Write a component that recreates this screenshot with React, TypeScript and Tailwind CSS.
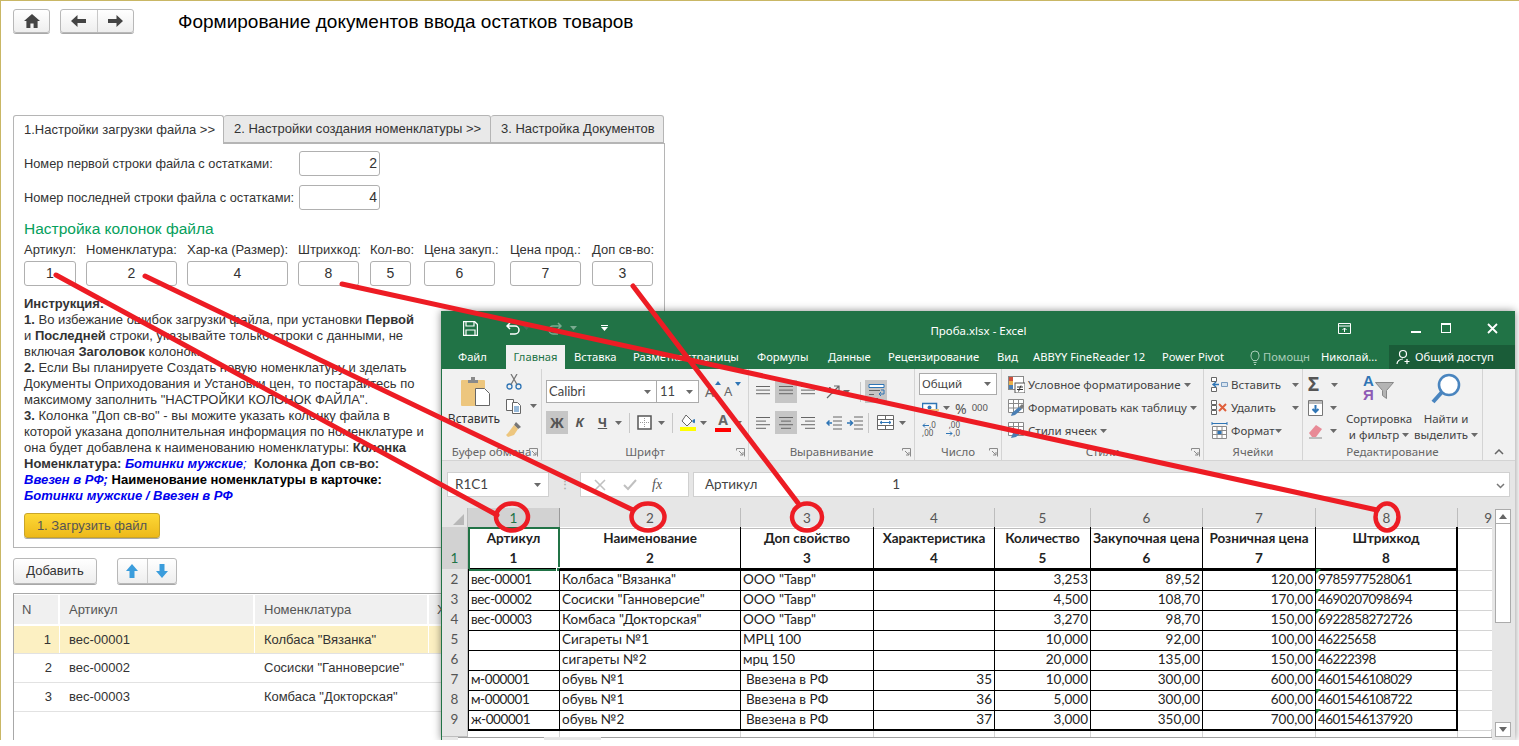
import React from "react";

const Caret = ({ className = "" }: { className?: string }) => (
  <svg width="7" height="4" viewBox="0 0 7 4" className={"shrink-0 " + className}><path d="M0 0h7L3.5 4z" fill="#6a6a6a" /></svg>
);

const Btn1C = ({ children, className = "" }: { children: React.ReactNode; className?: string }) => (
  <div className={"flex items-center justify-center rounded-[3px] border border-[#b8b8b8] bg-linear-to-b from-white to-[#eeeeee] shadow-[0_1px_0_#a8a8a8] " + className}>{children}</div>
);

const Field = ({ v, w, align = "center" }: { v: string; w: string; align?: string }) => (
  <div className={"h-[25px] rounded-[3px] border border-[#b0b0b0] flex items-center text-[#333] text-[14px] " + w + (align === "right" ? " justify-end pr-[2px]" : " justify-center")}>{v}</div>
);

const cols = [
  ["Артикул:", "w-[52px]", "1", "mr-[10px]"],
  ["Номенклатура:", "w-[91px]", "2", "mr-[10px]"],
  ["Хар-ка (Размер):", "w-[101px]", "4", "mr-[10px]"],
  ["Штрихкод:", "w-[61px]", "8", "mr-[11px]"],
  ["Кол-во:", "w-[41px]", "5", "mr-[13px]"],
  ["Цена закуп.:", "w-[71px]", "6", "mr-[15px]"],
  ["Цена прод.:", "w-[71px]", "7", "mr-[11px]"],
  ["Доп св-во:", "w-[61px]", "3", ""],
];

const Page1C = () => (
  <div className="w-[700px] h-[740px] border-l border-[#c9b765] font-['Liberation_Sans',Arial,sans-serif] text-[13px] text-[#333] overflow-hidden">
    <div className="flex items-start pl-[12px] pt-[9px] h-[115px]">
      <Btn1C className="w-[37px] h-[24px]">
        <svg width="16" height="14" viewBox="0 0 16 14"><path d="M8 0L0 7h2.4v7h4V9.500h3.200V14h4V7H16z" fill="#444" /></svg>
      </Btn1C>
      <Btn1C className="w-[74px] h-[24px] ml-[10px]">
        <span className="flex-1 flex justify-center border-r border-[#c8c8c8] h-full items-center">
          <svg width="15" height="12" viewBox="0 0 15 12"><path d="M6.500 0L0 6l6.500 6V8H15V4H6.500z" fill="#444" /></svg>
        </span>
        <span className="flex-1 flex justify-center">
          <svg width="15" height="12" viewBox="0 0 15 12"><path d="M8.500 0L15 6l-6.500 6V8H0V4h8.500z" fill="#444" /></svg>
        </span>
      </Btn1C>
      <div className="ml-[44px] mt-[2px] text-[19px] leading-[22px] text-black whitespace-nowrap">Формирование документов ввода остатков товаров</div>
    </div>

    <div className="ml-[12px] w-[652px]">
      <div className="flex h-[28px] items-stretch">
        <div className="w-[211px] border border-b-0 border-[#b5b5b5] rounded-t-[3px] bg-white flex items-center pl-[10px] pb-px z-10 -mb-px">1.Настройки загрузки файла &gt;&gt;</div>
        <div className="w-[267px] border border-l-0 border-[#b5b5b5] rounded-t-[3px] bg-[#e9e9e9] flex items-center pl-[10px] pb-px">2. Настройки создания номенклатуры &gt;&gt;</div>
        <div className="w-[173px] border border-l-0 border-[#b5b5b5] rounded-t-[3px] bg-[#e9e9e9] flex items-center pl-[10px] pb-px">3. Настройка Документов</div>
      </div>
      <div className="h-[405px] border border-[#b5b5b5] pl-[10px] pt-[7px]">
        <div className="flex items-center h-[25px] text-[12.800px]"><span className="w-[275px] whitespace-nowrap">Номер первой строки файла с остатками:</span><Field v="2" w="w-[81px]" align="right" /></div>
        <div className="flex items-center h-[25px] mt-[9px] text-[12.800px]"><span className="w-[275px] whitespace-nowrap">Номер последней строки файла с остатками:</span><Field v="4" w="w-[81px]" align="right" /></div>
        <div className="mt-[9px] text-[15.500px] leading-[20px] text-[#06a05c]">Настройка колонок файла</div>
        <div className="flex mt-[3px] leading-[16px] whitespace-nowrap">
          {cols.map((c) => <div key={c[0]} className={c[1] + " " + c[3]}>{c[0]}</div>)}
        </div>
        <div className="flex mt-[3px]">
          {cols.map((c) => <div key={c[0]} className={c[3]}><Field v={c[2]} w={c[1]} /></div>)}
        </div>
        <div className="mt-[10px] leading-[16px] whitespace-nowrap">
          <b>Инструкция:</b><br />
          <b>1.</b> Во избежание ошибок загрузки файла, при установки <b>Первой</b><br />
          и <b>Последней</b> строки, указывайте только строки с данными, не<br />
          включая <b>Заголовок</b> колонок.<br />
          <b>2.</b> Если Вы планируете Создать новую номенклатуру и зделать<br />
          Документы Оприходования и Установки цен, то постарайтесь по<br />
          максимому заполнить "НАСТРОЙКИ КОЛОНОК ФАЙЛА".<br />
          <b>3.</b> Колонка "Доп св-во" - вы можите указать колонку файла в<br />
          которой указана дополнительная информация по номенклатуре и<br />
          она будет добавлена к наименованию номенклатуры: <b>Колонка</b><br />
          <b>Номенклатура: </b><b className="italic text-[#0000ee]">Ботинки мужские</b><i className="text-[#0000ee]">;</i>&nbsp; <b>Колонка Доп св-во:</b><br />
          <b className="italic text-[#0000ee]">Ввезен в РФ; </b><b className="text-black">Наименование номенклатуры в карточке:</b><br />
          <b className="italic text-[#0000ee]">Ботинки мужские / Ввезен в РФ</b>
        </div>
        <div className="mt-[9px] w-[136px] h-[25px] rounded-[3px] border border-[#c9a52a] bg-linear-to-b from-[#fdd835] to-[#edb91a] shadow-[0_1px_0_#a8a8a8] flex items-center justify-center text-[#555]">1. Загрузить файл</div>
      </div>
      <div className="flex items-start mt-[10px]">
        <Btn1C className="w-[84px] h-[26px]">Добавить</Btn1C>
        <Btn1C className="w-[60px] h-[26px] ml-[20px]">
          <span className="flex-1 flex justify-center border-r border-[#c8c8c8] h-full items-center">
            <svg width="12" height="14" viewBox="0 0 12 14"><path d="M6 0l6 7H8.500v7h-5V7H0z" fill="#3b9ddc" /></svg>
          </span>
          <span className="flex-1 flex justify-center">
            <svg width="12" height="14" viewBox="0 0 12 14"><path d="M6 14l6-7H8.500V0h-5v7H0z" fill="#3b9ddc" /></svg>
          </span>
        </Btn1C>
      </div>
      <div className="mt-[9px] h-[150px] border-l border-t border-[#a8a8a8] w-[460px]">
        <div className="flex h-[31px] bg-[#f0f0f0] border-b-2 border-white mt-px">
          <div className="w-[46px] pl-[8px] flex items-center border-r-2 border-white text-[#555]">N</div>
          <div className="w-[195px] pl-[9px] flex items-center border-r-2 border-white text-[#555]">Артикул</div>
          <div className="w-[174px] pl-[9px] flex items-center border-r-2 border-white text-[#555]">Номенклатура</div>
          <div className="flex-1 pl-[8px] flex items-center text-[#555]">Х</div>
        </div>
        {[["1", "вес-00001", 'Колбаса "Вязанка"', true], ["2", "вес-00002", 'Сосиски "Ганноверсие"', false], ["3", "вес-00003", 'Комбаса "Докторская"', false]].map((r) => (
          <div key={r[0] as string} className={"flex border-b border-[#e2e2e2] " + (r[3] ? "h-[28px] bg-[#fcf0c2]" : "h-[29px]")}>
            <div className={"w-[46px] pr-[8px] flex items-center justify-end " + (r[3] ? "border-r border-white" : "")}>{r[0]}</div>
            <div className={"w-[195px] pl-[9px] flex items-center " + (r[3] ? "border-r border-white" : "")}>{r[1]}</div>
            <div className={"w-[174px] pl-[9px] flex items-center " + (r[3] ? "border-r border-white" : "")}>{r[2]}</div>
          </div>
        ))}
      </div>
    </div>
  </div>
);

/* ---------- Excel icons ---------- */
const Lines = ({ rows }: { rows: [number, number][] }) => (
  <svg width="15" height="14" viewBox="0 0 15 14">
    {rows.map((r, i) => <rect key={i} x={r[0]} y={i === 0 ? 1 : 1 + i * 3.6} width={r[1]} height="1" fill="#666" />)}
  </svg>
);
const Sel = ({ children, on }: { children: React.ReactNode; on?: boolean }) => (
  <div className={"w-[22px] h-[23px] flex items-center justify-center " + (on ? "bg-[#c6c6c6]" : "")}>{children}</div>
);

const RowIcon = ({ kind }: { kind: string }) => {
  if (kind === "cond") return (
    <svg width="17" height="17" viewBox="0 0 17 17">
      <rect x=".5" y=".5" width="15" height="13" fill="#fff" stroke="#888" />
      <rect x="1" y="1" width="4" height="4" fill="#d0503c" /><rect x="1" y="5" width="4" height="4" fill="#e9b04a" /><rect x="1" y="9" width="4" height="4" fill="#4a7fb5" />
      <rect x="7" y="7" width="10" height="10" fill="#fff" stroke="#555" /><path d="M9 11h6M9 13.500h6M13 9.500l-2.500 6" stroke="#333" fill="none" />
    </svg>
  );
  if (kind === "table") return (
    <svg width="17" height="17" viewBox="0 0 17 17">
      <path d="M.5.500h15v13H.500zM.500 4.500h15M.500 9h15M5.500.500v13M10.500.500v13" fill="#fff" stroke="#8a8a8a" />
      <path d="M3 17l1-3 7-6 3 2-7 6z" fill="#4a7fb5" /><path d="M11 8l3-3 2 2-2 3z" fill="#7a7a7a" />
    </svg>
  );
  if (kind === "cell") return (
    <svg width="17" height="17" viewBox="0 0 17 17">
      <path d="M.5.500h15v13H.500zM.500 4.500h15M.500 9h15M5.500.500v13M10.500.500v13" fill="#fff" stroke="#8a8a8a" />
      <path d="M3 16l2-5 8-4 1 3-6 5z" fill="#4a7fb5" />
    </svg>
  );
  if (kind === "ins") return (
    <svg width="17" height="17" viewBox="0 0 17 17">
      <path d="M.5 1.500h5v4h-5zM.500 11.500h5v4h-5z" fill="#fff" stroke="#666" /><path d="M10.500 6.500h6v4h-6z" fill="#d8e4f0" stroke="#7a9cc0" /><path d="M2 8.500h6M5 6l-3 2.500L5 11" fill="none" stroke="#2f75b5" strokeWidth="1.400" />
    </svg>
  );
  if (kind === "del") return (
    <svg width="17" height="17" viewBox="0 0 17 17">
      <path d="M.5 1.500h5v4h-5zM.500 6.500h5v4h-5zM.500 11.500h5v4h-5z" fill="#fff" stroke="#666" /><path d="M8 5l7 7M15 5l-7 7" stroke="#e0603c" strokeWidth="2" />
    </svg>
  );
  return (
    <svg width="17" height="17" viewBox="0 0 17 17">
      <path d="M1.500 4.500h14v12h-14zM1.500 8.500h14M1.500 12.500h14M6 4.500v12M11 4.500v12" fill="#fff" stroke="#8a8a8a" /><rect x="6.500" y="9" width="4" height="3" fill="#2f75b5" /><path d="M1 1.500h15M1 0v3M16 0v3" stroke="#2f75b5" fill="none" />
    </svg>
  );
};

const ribbonGroupLabel = "h-[16px] flex items-center justify-center text-[#666] relative text-[11.500px] whitespace-nowrap";
const Launch = () => (
  <svg width="9" height="9" viewBox="0 0 9 9" className="absolute right-[3px] top-[4px]"><path d="M.5.500h8v8M.500.500v2M3 3l4 4M7 4v3H4" fill="none" stroke="#8a8a8a" /></svg>
);

const Ribbon = () => (
  <div className="flex h-[92px] bg-[#f1f1f1] border-b border-[#d4d4d4] text-[#444] text-[11.500px] font-['Noto_Sans',sans-serif]">
    {/* clipboard */}
    <div className="w-[100px] border-r border-[#d4d4d4] flex flex-col">
      <div className="flex h-[76px]">
        <div className="w-[64px] flex flex-col items-center pt-[8px]">
          <svg width="30" height="29" viewBox="0 0 30 29" className="ml-[4px]">
            <rect x="0" y="3" width="24" height="26" rx="1" fill="#edc67e" />
            <path d="M7 3h3V0h4v3h3v3H7z" fill="#8a8a8a" />
            <path d="M14.500 11.500h9l5 5v12h-14z" fill="#fff" stroke="#666" />
          </svg>
          <div className="mt-[4px] text-[#333] text-[12px]">Вставить</div>
        </div>
        <div className="flex flex-col pt-[5px] gap-[8px]">
          <svg width="16" height="16" viewBox="0 0 16 16"><circle cx="3.500" cy="12.500" r="2.500" fill="none" stroke="#2f75b5" strokeWidth="1.300" /><circle cx="12.500" cy="12.500" r="2.500" fill="none" stroke="#2f75b5" strokeWidth="1.300" /><path d="M5 10.500L11 0M11 10.500L5 0" stroke="#777" strokeWidth="1.300" /></svg>
          <div className="flex items-center gap-[8px]">
            <svg width="16" height="16" viewBox="0 0 16 16"><path d="M.5 1.500h7v11h-7z" fill="#fff" stroke="#666" /><path d="M6.500 4.500h5l3 3v8h-8z" fill="#fff" stroke="#666" /><path d="M8 9h5M8 11h5M8 13h5" stroke="#2f75b5" /></svg>
            <Caret />
          </div>
          <svg width="16" height="16" viewBox="0 0 16 16"><path d="M10 0l5 5-3 2-4-4z" fill="#777" /><path d="M8 3l4 4-4 6-6 2-2-2 2-2z" fill="#edc67e" /></svg>
        </div>
      </div>
      <div className={ribbonGroupLabel}>Буфер обмена<Launch /></div>
    </div>
    {/* font */}
    <div className="w-[207px] border-r border-[#d4d4d4] flex flex-col pl-[4px]">
      <div className="h-[76px] pt-[11px]">
        <div className="flex items-center">
          <div className="w-[111px] h-[23px] bg-white border border-[#ababab] flex items-center pl-[2px] justify-between pr-[5px] font-['Lato',sans-serif] text-[13px]">Calibri<Caret /></div>
          <div className="w-[42px] h-[23px] bg-white border border-l-0 border-[#ababab] flex items-center pl-[3px] justify-between pr-[5px] font-['Lato',sans-serif] text-[13px]">11<Caret /></div>
          <div className="relative ml-[6px] w-[18px] text-[14px] text-[#666]">A<svg width="6" height="4" viewBox="0 0 6 4" className="absolute top-0 right-[2px]"><path d="M0 4h6L3 0z" fill="#2f75b5" /></svg></div>
          <div className="relative ml-[1px] w-[18px] text-[13px] text-[#666]">A<svg width="6" height="4" viewBox="0 0 6 4" className="absolute top-0 right-[1px]"><path d="M0 0h6L3 4z" fill="#2f75b5" /></svg></div>
        </div>
        <div className="flex items-center mt-[8px] h-[23px] text-[#555]">
          <div className="w-[22px] h-[23px] bg-[#c6c6c6] flex items-center justify-center font-bold text-[14px]">Ж</div>
          <div className="w-[23px] flex justify-center italic font-bold text-[13px]">К</div>
          <div className="w-[23px] flex justify-center font-bold text-[13px] underline">Ч</div>
          <Caret className="ml-[1px]" />
          <div className="w-px h-[20px] bg-[#c8c8c8] ml-[7px]" />
          <svg width="15" height="15" viewBox="0 0 15 15" className="ml-[7px]"><path d="M1 1h13v13H1z" fill="#fff" stroke="#555" strokeWidth="1.500" /><path d="M7.500 3v9M3 7.500h9" stroke="#999" strokeDasharray="1 1" /></svg>
          <Caret className="ml-[6px]" />
          <div className="w-px h-[20px] bg-[#c8c8c8] ml-[7px]" />
          <div className="ml-[7px] flex flex-col items-center w-[16px]">
            <svg width="16" height="13" viewBox="0 0 16 13"><path d="M6 1l6 6-5 5-5-5z" fill="#fff" stroke="#666" /><path d="M12 7c2-2 3-3 3 0s-1 3-3 0z" fill="#2f75b5" /></svg>
            <div className="w-[16px] h-[4px] bg-[#ffff00]" />
          </div>
          <Caret className="ml-[4px]" />
          <div className="ml-[8px] flex flex-col items-center w-[16px] leading-[14px]">
            <span className="font-bold text-[14px] text-[#666]">A</span>
            <div className="w-[16px] h-[4px] bg-[#ff0000] mt-px" />
          </div>
          <Caret className="ml-[4px]" />
        </div>
      </div>
      <div className={ribbonGroupLabel + " -ml-[4px]"}>Шрифт<Launch /></div>
    </div>
    {/* align */}
    <div className="w-[166px] border-r border-[#d4d4d4] flex flex-col pl-[7px]">
      <div className="h-[76px] pt-[11px]">
        <div className="flex items-center h-[23px]">
          <div className="w-[19px]"><Lines rows={[[0, 14], [0, 14], [0, 14]]} /></div>
          <Sel on><Lines rows={[[0, 14], [0, 14], [0, 14]]} /></Sel>
          <div className="w-[18px] ml-[4px]"><Lines rows={[[0, 14], [0, 14], [0, 14]]} /></div>
          <svg width="16" height="16" viewBox="0 0 16 16" className="ml-[6px]"><path d="M2 14L14 2M9 2h5v5" fill="none" stroke="#666" strokeWidth="1.200" /><path d="M1 7l4-4 3 7" fill="none" stroke="#666" /></svg>
          <Caret className="ml-[2px]" />
          <div className="w-px h-[20px] bg-[#c8c8c8] ml-[10px]" />
          <div className="ml-[4px] w-[22px] h-[23px] bg-[#c6c6c6] flex items-center justify-center">
            <svg width="17" height="17" viewBox="0 0 17 17"><path d="M1 1.500h15v3H1z" fill="#fff" stroke="#2f75b5" /><path d="M1 7.500h11M1 11.500h5M1 15.500h9" stroke="#666" /><path d="M13 7h3v4h-5M13 9l-2 2 2 2" fill="none" stroke="#2f75b5" /></svg>
          </div>
        </div>
        <div className="flex items-center h-[23px] mt-[8px]">
          <div className="w-[19px]"><Lines rows={[[0, 14], [0, 10], [0, 14], [0, 10]]} /></div>
          <Sel on><Lines rows={[[0, 14], [2, 10], [0, 14], [2, 10]]} /></Sel>
          <div className="w-[18px] ml-[4px]"><Lines rows={[[0, 14], [4, 10], [0, 14], [4, 10]]} /></div>
          <svg width="16" height="14" viewBox="0 0 16 14" className="ml-[7px]"><path d="M7 1h9M7 5h9M7 9h9M7 13h9" stroke="#666" /><path d="M6 7H1M3.500 4.500L1 7l2.500 2.500" fill="none" stroke="#2f75b5" strokeWidth="1.500" /></svg>
          <svg width="16" height="14" viewBox="0 0 16 14" className="ml-[5px]"><path d="M7 1h9M7 5h9M7 9h9M7 13h9" stroke="#666" /><path d="M0 7h5M3 4.500L5.500 7 3 9.500" fill="none" stroke="#2f75b5" strokeWidth="1.500" /></svg>
          <div className="w-px h-[20px] bg-[#c8c8c8] ml-[5px]" />
          <svg width="17" height="15" viewBox="0 0 17 15" className="ml-[8px]"><path d="M.5.500h16v14H.500zM.500 4.500h16M.500 10.500h16M8.500.500v4M8.500 10.500v4" fill="#fff" stroke="#666" /><path d="M3 7.500h11M5 6l-2 1.500L5 9M12 6l2 1.500L12 9" fill="none" stroke="#2f75b5" /></svg>
          <Caret className="ml-[5px]" />
        </div>
      </div>
      <div className={ribbonGroupLabel + " -ml-[7px]"}>Выравнивание<Launch /></div>
    </div>
    {/* number */}
    <div className="w-[87px] border-r border-[#d4d4d4] flex flex-col pl-[4px]">
      <div className="h-[76px] pt-[4px]">
        <div className="w-[78px] h-[22px] bg-white border border-[#ababab] flex items-center justify-between pl-[2px] pr-[5px]">Общий<Caret /></div>
        <div className="flex items-center h-[22px] mt-[2px]">
          <svg width="17" height="15" viewBox="0 0 17 15" className="ml-[3px]"><rect x=".5" y="2.500" width="14" height="8" fill="#fff" stroke="#2f75b5" strokeWidth="1.500" /><circle cx="7.500" cy="6.500" r="2" fill="#2f75b5" /><rect x="7" y="8" width="10" height="2" fill="#edc67e" /><rect x="7" y="11" width="10" height="2" fill="#edc67e" /></svg>
          <Caret className="ml-[4px]" />
          <span className="ml-[5px] text-[14px] text-[#555]">%</span>
          <span className="ml-[5px] text-[9.500px] text-[#555]">000</span>
        </div>
        <div className="flex items-start h-[22px] mt-[2px] text-[8px] leading-[8px] text-[#555]">
          <div className="ml-[3px] w-[14px] flex flex-col">
            <span className="flex items-center"><svg width="7" height="5" viewBox="0 0 7 5"><path d="M7 2.500H1M3 .500L1 2.500l2 2" stroke="#2f75b5" fill="none" /></svg>,0</span>
            <span>,00</span>
          </div>
          <div className="ml-[10px] w-[14px] flex flex-col items-end">
            <span>,00</span>
            <span className="flex items-center"><svg width="7" height="5" viewBox="0 0 7 5"><path d="M0 2.500h6M4 .500l2 2-2 2" stroke="#2f75b5" fill="none" /></svg>,0</span>
          </div>
        </div>
      </div>
      <div className={ribbonGroupLabel + " -ml-[4px]"}>Число<Launch /></div>
    </div>
    {/* styles */}
    <div className="w-[202px] border-r border-[#d4d4d4] flex flex-col pl-[6px]">
      <div className="h-[76px] pt-[4px]">
        {[["cond", "Условное форматирование"], ["table", "Форматировать как таблицу"], ["cell", "Стили ячеек"]].map((r) => (
          <div key={r[0]} className="flex items-center h-[23px] whitespace-nowrap">
            <RowIcon kind={r[0]} />
            <span className="ml-[3px]">{r[1]}</span>
            <Caret className="ml-[3px]" />
          </div>
        ))}
      </div>
      <div className={ribbonGroupLabel + " -ml-[6px]"}>Стили<Launch /></div>
    </div>
    {/* cells */}
    <div className="w-[99px] border-r border-[#d4d4d4] flex flex-col pl-[7px]">
      <div className="h-[76px] pt-[4px]">
        {[["ins", "Вставить", "w-[61px]"], ["del", "Удалить", "w-[61px]"], ["fmt", "Формат", "w-[44px]"]].map((r) => (
          <div key={r[0]} className="flex items-center h-[23px] whitespace-nowrap">
            <RowIcon kind={r[0]} />
            <span className={"ml-[3px] " + r[2]}>{r[1]}</span>
            <Caret />
          </div>
        ))}
      </div>
      <div className={ribbonGroupLabel + " -ml-[7px]"}>Ячейки</div>
    </div>
    {/* edit */}
    <div className="w-[180px] border-r border-[#d4d4d4] flex flex-col">
      <div className="h-[76px] flex">
        <div className="w-[42px] pl-[5px] pt-[4px]">
          <div className="flex items-center h-[23px]"><span className="text-[19px] font-bold text-[#555] w-[20px] leading-none">Σ</span><Caret className="ml-[3px]" /></div>
          <div className="flex items-center h-[23px]">
            <svg width="15" height="16" viewBox="0 0 15 16"><path d="M.5.500h14v15H.500z" fill="#fff" stroke="#777" /><rect x="1" y="1" width="13" height="3" fill="#bbb" /><path d="M7.500 5v7M4.500 9l3 3 3-3" fill="none" stroke="#2f75b5" strokeWidth="2" /></svg>
            <Caret className="ml-[7px]" />
          </div>
          <div className="flex items-center h-[23px]">
            <svg width="16" height="16" viewBox="0 0 16 16"><path d="M1 10l7-8 6 4-6 8H4z" fill="#e88a96" /><path d="M1 15h13" stroke="#888" /></svg>
            <Caret className="ml-[6px]" />
          </div>
        </div>
        <div className="w-[68px] flex flex-col items-center pt-[4px]">
          <div className="relative w-[32px] h-[32px] font-['Liberation_Sans',sans-serif] font-bold text-[15px] leading-[14px]">
            <span className="absolute left-0 top-[1px] text-[#2f75b5]">A</span>
            <span className="absolute left-0 top-[15px] text-[#8e5bb5]">Я</span>
            <svg width="20" height="18" viewBox="0 0 20 18" className="absolute left-[12px] top-[9px]"><path d="M.5.500h18l-7 8v8l-4-3V8.500z" fill="#b4b4b4" stroke="#888" /></svg>
          </div>
          <div className="mt-[6px] leading-[16px] text-center whitespace-nowrap">Сортировка<br /><span className="inline-flex items-center gap-[3px]">и фильтр<Caret /></span></div>
        </div>
        <div className="w-[66px] flex flex-col items-center pt-[4px]">
          <svg width="30" height="31" viewBox="0 0 30 31"><circle cx="18" cy="12" r="10" fill="#fff" stroke="#4a85bf" strokeWidth="2.600" /><path d="M11 19L2 29" stroke="#4a85bf" strokeWidth="4" /></svg>
          <div className="mt-[7px] leading-[16px] text-center whitespace-nowrap">Найти и<br /><span className="inline-flex items-center gap-[3px]">выделить<Caret /></span></div>
        </div>
      </div>
      <div className={ribbonGroupLabel}>Редактирование</div>
    </div>
    <div className="flex-1 flex items-end justify-center pb-[5px]">
      <svg width="10" height="6" viewBox="0 0 10 6"><path d="M1 5l4-4 4 4" stroke="#666" strokeWidth="1.500" fill="none" /></svg>
    </div>
  </div>
);

const TitleBar = () => (
  <div className="bg-[#217346] text-white h-[58px] font-['Noto_Sans',sans-serif]">
    <div className="flex items-center h-[34px] pl-[21px] pr-[17px] relative">
      <svg width="15" height="15" viewBox="0 0 15 15"><path d="M.5.500h11l3 3v11H.500z" fill="none" stroke="#fff" strokeWidth="1.400" /><path d="M3 1v4h8V1M3 14V9h9v5" fill="none" stroke="#fff" strokeWidth="1.200" /></svg>
      <svg width="14" height="14" viewBox="0 0 14 14" className="ml-[28px]"><path d="M1 5h8a4 4 0 010 8H4M4 2L1 5l3 3" fill="none" stroke="#fff" strokeWidth="1.500" /></svg>
      <Caret className="ml-[3px] opacity-50" />
      <svg width="14" height="14" viewBox="0 0 14 14" className="ml-[18px] opacity-40"><path d="M13 5H5a4 4 0 000 8h5M10 2l3 3-3 3" fill="none" stroke="#fff" strokeWidth="1.500" /></svg>
      <svg width="7" height="4" viewBox="0 0 7 4" className="ml-[8px] opacity-40"><path d="M0 0h7L3.500 4z" fill="#fff" /></svg>
      <svg width="7" height="6" viewBox="0 0 7 6" className="ml-[24px]"><path d="M0 2h7L3.500 6z" fill="#fff" /><rect y="0" width="7" height="1" fill="#fff" /></svg>
      <div className="absolute left-0 right-0 text-center text-[11.500px] top-[11px] pointer-events-none">Проба.xlsx - Excel</div>
      <div className="ml-auto flex items-center">
        <svg width="13" height="11" viewBox="0 0 13 11"><path d="M.5.500h12v10H.500zM.500 3h12M6.500 9V5M4.500 7l2-2 2 2" fill="none" stroke="#fff" /></svg>
        <div className="w-[10px] h-[2px] bg-white ml-[60px] mt-[7px]" />
        <div className="w-[10px] h-[10px] border border-white border-t-2 ml-[20px]" />
        <svg width="11" height="11" viewBox="0 0 11 11" className="ml-[36px]"><path d="M1 1l9 9M10 1l-9 9" stroke="#fff" strokeWidth="1.800" /></svg>
      </div>
    </div>
    <div className="flex items-stretch h-[24px] text-[11.200px] whitespace-nowrap">
      <div className="pl-[16px] w-[64px] flex items-center">Файл</div>
      <div className="w-[59px] bg-[#f1f1f1] text-[#217346] flex items-center justify-center">Главная</div>
      <div className="ml-[9px] w-[59px] flex items-center">Вставка</div>
      <div className="w-[124px] flex items-center">Разметка страницы</div>
      <div className="w-[71px] flex items-center">Формулы</div>
      <div className="w-[60px] flex items-center">Данные</div>
      <div className="w-[109px] flex items-center">Рецензирование</div>
      <div className="w-[36px] flex items-center">Вид</div>
      <div className="w-[129px] flex items-center">ABBYY FineReader 12</div>
      <div className="w-[88px] flex items-center">Power Pivot</div>
      <div className="w-[60px] mr-[11px] flex items-center gap-[3px] text-[#a9cdb9] overflow-hidden">
        <svg width="10" height="15" viewBox="0 0 10 15" className="shrink-0"><path d="M3 10.500C1 8 1 6.500 1 5a4 4 0 018 0c0 1.500 0 3-2 5.500zM3.500 12.500h3M4 14.500h2" fill="none" stroke="#a9cdb9" /></svg>
        Помощник
      </div>
      <div className="w-[68px] flex items-center">Николай...</div>
      <div className="flex-1 bg-[#1a5c38] flex items-center pl-[7px] gap-[4px]">
        <svg width="15" height="16" viewBox="0 0 15 16"><circle cx="7" cy="5" r="3.500" fill="none" stroke="#fff" strokeWidth="1.200" /><path d="M1 15c0-3 3-5 6-5M11 10v5M8.500 12.500h5" fill="none" stroke="#fff" strokeWidth="1.200" /></svg>
        Общий доступ
      </div>
    </div>
  </div>
);

const FormulaBar = () => (
  <div className="h-[47px] bg-[#e6e6e6] flex items-start pt-[11px] pl-[5px] font-['Lato',sans-serif] text-[13.500px] text-[#444]">
    <div className="w-[102px] h-[25px] bg-white border border-[#d0d0d0] flex items-center justify-between pl-[7px] pr-[7px]">R1C1<Caret /></div>
    <div className="w-[31px] h-[25px] flex items-center justify-center text-[#aaa] font-bold text-[10px]">⋮</div>
    <div className="w-[109px] h-[25px] bg-white border border-[#d0d0d0] flex items-center text-[#bbb]">
      <svg width="12" height="12" viewBox="0 0 12 12" className="ml-[13px]"><path d="M1 1l10 10M11 1L1 11" stroke="#c0c0c0" strokeWidth="1.600" /></svg>
      <svg width="14" height="12" viewBox="0 0 14 12" className="ml-[17px]"><path d="M1 6l4 4 8-9" stroke="#c0c0c0" strokeWidth="2" fill="none" /></svg>
      <span className="ml-[15px] italic font-['Liberation_Serif',serif] text-[#555] text-[14px]">fx</span>
    </div>
    <div className="w-[817px] h-[25px] ml-[4px] bg-white border border-[#d0d0d0] flex items-center pl-[11px] relative">
      Артикул<span className="ml-[135px]">1</span>
      <svg width="9" height="6" viewBox="0 0 9 6" className="absolute right-[4px] top-[10px]"><path d="M1 1l3.500 3.500L8 1" stroke="#777" strokeWidth="1.500" fill="none" /></svg>
    </div>
  </div>
);

const tpl = "grid grid-cols-[26px_92px_181px_133px_121px_96px_112px_113px_142px_34px]";
const data: string[][] = [
  ["2", "вес-00001", 'Колбаса "Вязанка"', 'ООО "Тавр"', "", "3,253", "89,52", "120,00", "9785977528061"],
  ["3", "вес-00002", 'Сосиски "Ганноверсие"', 'ООО "Тавр"', "", "4,500", "108,70", "170,00", "4690207098694"],
  ["4", "вес-00003", 'Комбаса "Докторская"', 'ООО "Тавр"', "", "3,270", "98,70", "150,00", "6922858272726"],
  ["5", "", "Сигареты №1", "МРЦ 100", "", "10,000", "92,00", "100,00", "46225658"],
  ["6", "", "сигареты №2", "мрц 150", "", "20,000", "135,00", "150,00", "46222398"],
  ["7", "м-000001", "обувь №1", " Ввезена в РФ", "35", "10,000", "300,00", "600,00", "4601546108029"],
  ["8", "м-000001", "обувь №1", " Ввезена в РФ", "36", "5,000", "300,00", "600,00", "4601546108722"],
  ["9", "ж-000001", "обувь №2", " Ввезена в РФ", "37", "3,000", "350,00", "700,00", "4601546137920"],
];
const heads = ["Артикул", "Наименование", "Доп свойство", "Характеристика", "Количество", "Закупочная цена", "Розничная цена", "Штрихкод"];
const rowHeadCls = "bg-[#e6e6e6] border-r border-b border-[#bdbdbd] text-[#555] flex items-center justify-center";

const Sheet = () => (
  <div className="flex font-['Lato',sans-serif] text-[13.500px] text-[#222]">
    <div className="w-[1051px] bg-white">
      <div className={tpl + " h-[19px] bg-[#e6e6e6] text-[#555]"}>
        <div className="border-r border-b border-[#bdbdbd] flex items-end justify-end pr-[3px] pb-[3px]">
          <svg width="11" height="11" viewBox="0 0 11 11"><path d="M11 0v11H0z" fill="#b8b8b8" /></svg>
        </div>
        <div className="bg-[#d2d2d2] border-r border-b border-[#9a9a9a] flex items-center justify-center text-[#217346]">1</div>
        {["2", "3", "4", "5", "6", "7", "8"].map((n) => <div key={n} className="border-r border-b border-[#bdbdbd] flex items-center justify-center">{n}</div>)}
        <div className="border-b border-[#bdbdbd] flex items-center justify-end">9</div>
      </div>
      <div className={tpl + " h-[42px]"}>
        <div className="bg-[#d2d2d2] border-r border-b border-[#bdbdbd] text-[#217346] flex items-end justify-center pb-[2px]">1</div>
        {heads.map((h, i) => (
          <div key={h} className={"relative border-b-[3px] border-black flex flex-col items-center pt-px font-bold leading-[20px] whitespace-nowrap " + (i === 7 ? "border-r-[2px]" : "border-r")}>
            <span>{h}</span><span>{i + 1}</span>
            {i === 0 && <div className="absolute left-0 top-0 right-[-1px] bottom-[-3px] border-2 border-[#217346]"><div className="absolute right-[-3px] bottom-[-3px] w-[5px] h-[5px] bg-[#217346] border border-white" /></div>}
          </div>
        ))}
        <div className="border-b border-[#d4d4d4]" />
      </div>
      {data.map((r, ri) => (
        <div key={r[0]} className={tpl + " h-[20px] leading-[21px]"}>
          <div className={rowHeadCls}>{r[0]}</div>
          {r.slice(1).map((c, i) => (
            <div key={i} className={"relative border-black whitespace-nowrap overflow-hidden " + (ri === 7 ? "border-b-[2px] " : "border-b ") + (i === 7 ? "border-r-[2px] pl-[2px] tracking-[-0.6px]" : "border-r ") + (i === 0 ? "border-l pl-[2px] tracking-[-0.4px]" : i < 3 ? "pl-[2px]" : i < 7 ? "text-right pr-[2px]" : "") + (i === 2 && c.startsWith(" ") ? " pl-[5px]" : "")}>
              {i === 7 && ri !== 3 && <svg width="5" height="5" viewBox="0 0 5 5" className="absolute left-0 top-0"><path d="M0 0h5L0 5z" fill="#1f8a3c" /></svg>}
              {c.trim()}
            </div>
          ))}
          <div className="border-b border-[#d4d4d4]" />
        </div>
      ))}
      <div className={tpl + " h-[8px]"}>
        <div className={rowHeadCls} />
        {[0, 1, 2, 3, 4, 5, 6, 7, 8].map((i) => <div key={i} className="border-r border-[#d4d4d4]" />)}
      </div>
      <div className="flex h-[3px] bg-[#e6e6e6] pl-[16px]">
        <div className="w-[86px] border-t border-[#a0a0a0] bg-white" />
        <div className="w-[57px]" />
        <div className="flex-1 border-t border-[#a0a0a0] bg-white" />
      </div>
    </div>
    <div className="w-[23px] bg-[#e6e6e6] pl-[3px] pt-[1px]">
      <div className="w-[16px] h-[228px] bg-[#e6e6e6] flex flex-col">
        <div className="h-[15px] bg-white border border-[#ababab] flex items-center justify-center"><svg width="8" height="5" viewBox="0 0 8 5"><path d="M0 5h8L4 0z" fill="#666" /></svg></div>
        <div className="h-[99px] bg-white border-x border-b border-[#ababab]" />
        <div className="flex-1" />
        <div className="h-[15px] bg-white border border-[#ababab] flex items-center justify-center"><svg width="8" height="5" viewBox="0 0 8 5"><path d="M0 0h8L4 5z" fill="#666" /></svg></div>
      </div>
    </div>
  </div>
);

const Marks = () => (
  <svg className="absolute inset-0 pointer-events-none" width="1519" height="740" viewBox="0 0 1519 740">
    <g stroke="#ed1c24" fill="none" strokeLinecap="round">
      <path d="M56 275L497 515" strokeWidth="5" />
      <path d="M145 276L633 510" strokeWidth="5" />
      <path d="M342 284L1377 510" strokeWidth="5" />
      <path d="M633 286L798 503" strokeWidth="5" />
      <ellipse cx="512" cy="517" rx="16" ry="13.500" strokeWidth="4.500" />
      <ellipse cx="648" cy="517" rx="16.500" ry="13.500" strokeWidth="4.500" />
      <ellipse cx="807" cy="517" rx="15" ry="13.500" strokeWidth="4.500" />
      <ellipse cx="1387" cy="517" rx="11.500" ry="13.500" strokeWidth="4.500" />
    </g>
  </svg>
);

export default function App() {
  return (
    <div className="w-[1519px] h-[746px] bg-white overflow-hidden">
      <div className="relative w-[1519px] h-[740px] overflow-hidden">
        <Page1C />
        <div className="absolute left-0 top-0 w-full h-px bg-[#c9b765]" />
        <div className="absolute left-[441px] top-[311px] w-[1074px] h-[429px] border-l border-[#217346] shadow-[0_0_8px_rgba(0,0,0,0.45)] bg-[#e6e6e6] overflow-hidden">
          <TitleBar />
          <Ribbon />
          <FormulaBar />
          <Sheet />
        </div>
        <Marks />
      </div>
    </div>
  );
}
